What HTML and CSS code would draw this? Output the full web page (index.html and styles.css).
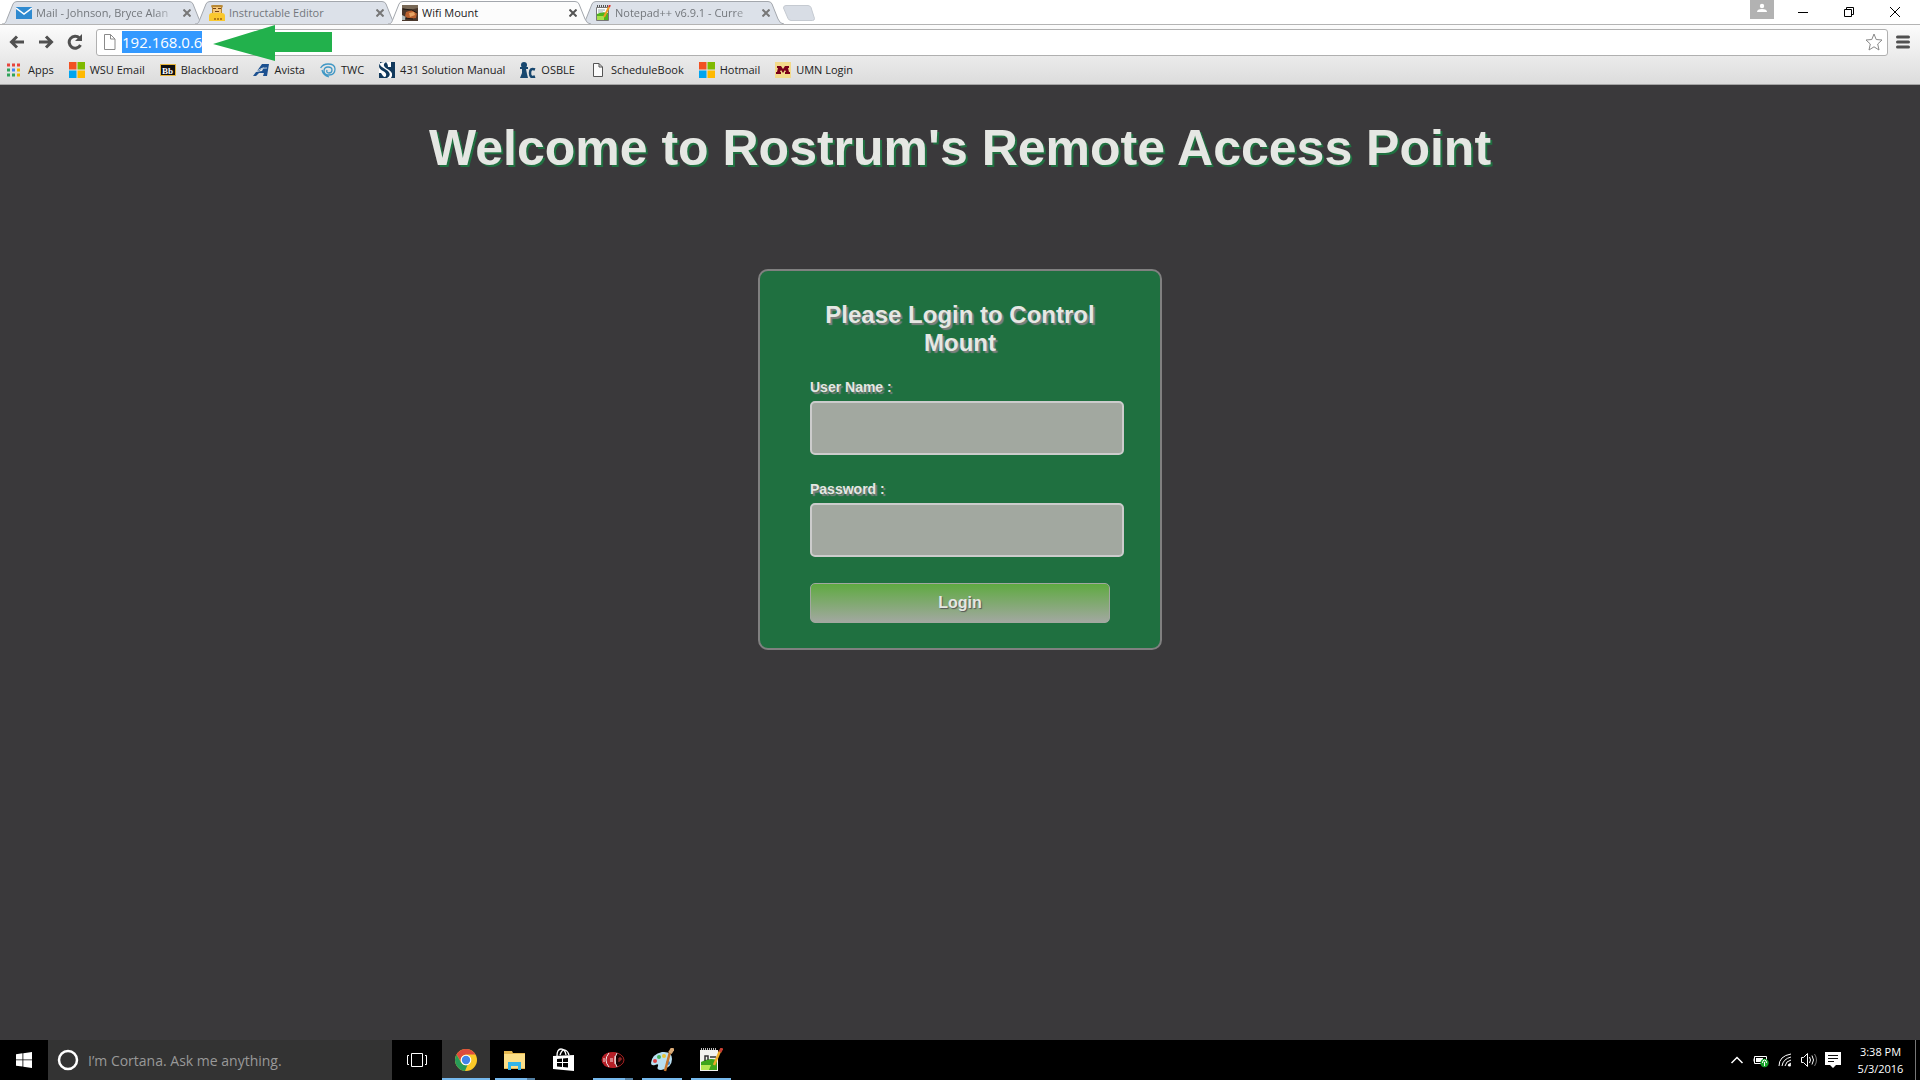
FILE: index.html
```html
<!DOCTYPE html>
<html lang="en">
<head>
<meta charset="utf-8">
<title>Wifi Mount</title>
<link rel="stylesheet" href="styles.css">
</head>
<body>
<svg class="defs" aria-hidden="true">
  <symbol id="tab-shape" viewBox="0 0 203 24"><path d="M0 24C4 24 4 21 5 19L11 4Q12 1.500 15 1.500H187Q190 1.500 191 4L197 19Q199 24 203 24" stroke="#a3a7ad"/></symbol>
  <symbol id="ms" viewBox="0 0 16 16"><path fill="#f25022" d="M0 0h7.500v7.500H0z"/><path fill="#7fba00" d="M8.500 0H16v7.500H8.500z"/><path fill="#00a4ef" d="M0 8.500h7.500V16H0z"/><path fill="#ffb900" d="M8.500 8.500H16V16H8.500z"/></symbol>
  <symbol id="page" viewBox="0 0 16 16"><path d="M3.500 1.500h5.500l3.500 3.500v9.500h-9zM9 1.500V5h3.500" fill="#fbfbfb" stroke="currentColor"/></symbol>
  <symbol id="npp" viewBox="0 0 16 16"><path d="M1.500 2.500h12v13h-12z" fill="#fff" stroke="#777"/><path d="M2 9q5-3 11-1v7H2z" fill="#4fb51c"/><path d="M2 11h7v4H2z" fill="#a8e04c"/><path d="M2 1h11" stroke="#555" stroke-width="2" stroke-dasharray="1 1"/><path d="M3 5h7M3 7h5" stroke="#9aa"/><path d="M14 2L9 12" stroke="#ee9b20" stroke-width="2"/><path d="M15 0l-1 2" stroke="#d33" stroke-width="2"/></symbol>
</svg>

<header class="browser">
  <div class="strip">
    <nav class="tabs" aria-label="Tabs">
      <div class="tab">
        <svg class="shape"><use href="#tab-shape"/></svg>
        <svg class="icon" viewBox="0 0 16 16"><path fill="#2f8ad0" d="M0 2h16v12H0z"/><path d="M0 3l8 6 8-6" fill="none" stroke="#fff" stroke-width="1.500"/></svg>
        <span class="name fade">Mail - Johnson, Bryce Alan</span>
        <button class="close" aria-label="Close tab"><svg viewBox="0 0 8 8"><path d="M.5.5l7 7M7.500.5l-7 7"/></svg></button>
      </div>
      <div class="tab">
        <svg class="shape"><use href="#tab-shape"/></svg>
        <svg class="icon" viewBox="0 0 16 16"><path fill="#b88835" d="M2 1q0-1 2-1h8q2 0 2 1l-1 2v5H3V3z"/><path fill="#f6c777" d="M4 2h8v6H4z"/><path d="M4 3.500h3m2 0h3M6 6.500h4" stroke="#704014"/><path fill="#fac82e" d="M0 16v-5q0-3 3-3h10q3 0 3 3v5z"/><path d="M5 14h8" stroke="#b67d15" stroke-width="2" stroke-dasharray="2 1"/></svg>
        <span class="name">Instructable Editor</span>
        <button class="close" aria-label="Close tab"><svg viewBox="0 0 8 8"><path d="M.5.5l7 7M7.500.5l-7 7"/></svg></button>
      </div>
      <div class="tab active">
        <svg class="shape"><use href="#tab-shape"/></svg>
        <svg class="icon" viewBox="0 0 16 16"><path fill="#49372b" d="M0 0h16v16H0z"/><path fill="#786856" d="M0 0h16v3L7 5 0 3z"/><path fill="#b8602e" d="M4 7l6-2 5 3-1 5-8 1-3-3z"/><path fill="#e8a565" d="M7 8l5-1 1 3-5 2z"/><path fill="#aeb8b8" d="M0 10l4 2-1 3H0z"/><path d="M1 4l9 1 5 3M3 13l8 1" stroke="#1c1511" fill="none"/></svg>
        <span class="name">Wifi Mount</span>
        <button class="close" aria-label="Close tab"><svg viewBox="0 0 8 8"><path d="M.5.5l7 7M7.500.5l-7 7"/></svg></button>
      </div>
      <div class="tab">
        <svg class="shape"><use href="#tab-shape"/></svg>
        <svg class="icon"><use href="#npp"/></svg>
        <span class="name fade">Notepad++ v6.9.1 - Curre</span>
        <button class="close" aria-label="Close tab"><svg viewBox="0 0 8 8"><path d="M.5.5l7 7M7.500.5l-7 7"/></svg></button>
      </div>
      <button class="newtab" aria-label="New tab"><svg viewBox="0 0 32 16"><path fill="#d8dde5" stroke="#c5cad1" d="M3 .5h22q2 0 3 2l3.500 11q0 2-2 2H8q-2 0-3-2L.5 3Q.5.5 3 .5z"/></svg></button>
    </nav>
    <div class="window-buttons">
      <button class="profile" aria-label="Profile"><svg viewBox="0 0 24 19"><circle cx="12" cy="6" r="2.200" fill="#fff"/><path fill="#fff" d="M7 12q0-3 5-3t5 3z"/></svg></button>
      <button aria-label="Minimize"><svg viewBox="0 0 46 24"><path d="M18 12.500h10"/></svg></button>
      <button aria-label="Restore"><svg viewBox="0 0 46 24"><path d="M18.500 9.500h7v7h-7zM20.500 9V7.500h7v7H26"/></svg></button>
      <button aria-label="Close"><svg viewBox="0 0 46 24"><path d="M18 7l10 10M28 7L18 17"/></svg></button>
    </div>
  </div>

  <div class="toolbar">
    <div class="address-row">
      <button class="nav" aria-label="Back"><svg viewBox="0 0 16 16"><path d="M15 8H3M8 2.500L2.500 8 8 13.500"/></svg></button>
      <button class="nav" aria-label="Forward"><svg viewBox="0 0 16 16"><path d="M1 8h12M8 2.500L13.500 8 8 13.500"/></svg></button>
      <button class="nav" aria-label="Reload"><svg viewBox="0 0 16 16"><path d="M12.500 4A6 6 0 1 0 13.500 11"/><path d="M15 0v7H8z" fill="#505050" stroke="none"/></svg></button>
      <div class="omnibox">
        <svg class="icon site" viewBox="0 0 16 16"><path d="M2.500.5h6L13 5v10.500H2.500zM8.500.5V5H13" fill="#fff" stroke="#8a8a8a"/></svg>
        <input class="url" type="text" value="192.168.0.6" aria-label="Address" spellcheck="false">
        <svg class="pointer" viewBox="0 0 120 36"><path fill="#22b14c" d="M0 19L62 0v7h57v20H62v9z"/></svg>
        <button class="star" aria-label="Bookmark this page"><svg viewBox="0 0 18 18"><path d="M9 1l2.200 5.500 5.800.5-4.300 4L14 17l-5-3.200L4 17l1.300-6L1 7l5.800-.5z"/></svg></button>
      </div>
      <button class="menu" aria-label="Menu"><svg viewBox="0 0 14 14"><path d="M1.500 2h11M1.500 7h11M1.500 12h11"/></svg></button>
    </div>
    <nav class="bookmarks" aria-label="Bookmarks">
      <a href="#"><svg class="icon" viewBox="0 0 16 16"><g stroke-width="3" stroke-dasharray="3 2"><path d="M0 3h13" stroke="#e7453c"/><path d="M0 8h3" stroke="#2fa35a"/><path d="M5 8h3" stroke="#4285f4"/><path d="M10 8h3" stroke="#f0b400"/><path d="M0 13h8" stroke="#2fa35a"/><path d="M10 13h3" stroke="#f0b400"/></g></svg>Apps</a>
      <a href="#"><svg class="icon"><use href="#ms"/></svg>WSU Email</a>
      <a href="#"><svg class="icon" viewBox="0 0 16 16"><path d="M.5 2.500h15v11H.5z" fill="#111" stroke="#e8b63c"/><text x="2" y="12" class="bb">Bb</text></svg>Blackboard</a>
      <a href="#"><svg class="icon" viewBox="0 0 16 16"><path fill="#1c5090" d="M9 2h7l-2 12h-4l1-3H6l-3 3H0l3-4 6-1 2-4-5 4H4z"/><path d="M4 9q5-4 10-3" stroke="#bcd" fill="none"/></svg>Avista</a>
      <a href="#"><svg class="icon" viewBox="0 0 16 16"><path d="M.6 6Q3 2 8 2q7 0 7 5 0 6-6 6-5 0-5-4 0-4 4-4 4 0 4 3t-3 3-2-3M2 8q1 5 7 7" fill="none" stroke="#3f97c5" stroke-width="1.300"/></svg>TWC</a>
      <a href="#"><svg class="icon" viewBox="0 0 16 16"><path fill="#fff" d="M0 0h16v16H0z"/><path fill="#11395c" d="M1 0h7Q4 1 5 4q1 2 5 4 5 3 2 8h4V0h-4v5H9Q9 1 6 0 0 0 0 4q0 3 4 5 4 2 3 5-1 2-3 0l-2-3H0v5h8q5-3 1-7L3 5Q0 3 1 0z"/></svg>431 Solution Manual</a>
      <a href="#"><svg class="icon" viewBox="0 0 16 16"><circle cx="4" cy="3" r="3" fill="#17476f"/><path fill="#17476f" d="M0 5h8v2H6l1 5 1 4H0l2-5V7H0z"/><path d="M15 7.500q-5-2-5 3.500t5 3.500" fill="none" stroke="#17476f" stroke-width="2.500"/></svg>OSBLE</a>
      <a href="#"><svg class="icon dark"><use href="#page"/></svg>ScheduleBook</a>
      <a href="#"><svg class="icon"><use href="#ms"/></svg>Hotmail</a>
      <a href="#"><svg class="icon" viewBox="0 0 16 16"><path fill="#f3da8b" d="M0 0h16v16H0z"/><path fill="#7a0019" d="M2 4h4l2 3 2-3h4v2h-1l1 4h1v2h-5v-2h1l-1-2-2 3-2-3-1 2h1v2H1v-2h1l1-4H2z"/></svg>UMN Login</a>
    </nav>
  </div>
</header>

<main class="site-page">
  <h1>Welcome to Rostrum's Remote Access Point</h1>
  <form class="login">
    <h2>Please Login to Control Mount</h2>
    <div class="field"><label for="user">User Name :</label><input id="user" type="text"></div>
    <div class="field"><label for="pass">Password :</label><input id="pass" type="password"></div>
    <button type="button">Login</button>
  </form>
</main>

<footer class="taskbar">
  <button class="task start" aria-label="Start"><svg viewBox="0 0 16 16"><path fill="#fff" d="M0 2.200L6.500 1.300v6.200H0zM7.300 1.200L16 0v7.500H7.300zM0 8.300h6.500v6.300L0 13.700zM7.300 8.300H16V16l-8.700-1.200z"/></svg></button>
  <div class="cortana">
    <svg viewBox="0 0 22 22"><circle cx="11" cy="11" r="9" fill="none" stroke="#fff" stroke-width="2.500"/></svg>
    <input type="text" placeholder="I’m Cortana. Ask me anything." aria-label="Search">
  </div>
  <div class="tasks">
    <button class="task" aria-label="Task view"><svg viewBox="0 0 24 24"><path d="M6.500 5.500h11v13h-11zM4 7.500H2.500v9H4M20 7.500h1.500v9H20" fill="none" stroke="#fff"/></svg></button>
    <button class="task current" aria-label="Chrome"><svg viewBox="0 0 24 24"><circle cx="12" cy="12" r="11" fill="#fbc928"/><path fill="#de4b3e" d="M2.500 6.500A11 11 0 0 1 21.500 6.500H12A5.500 5.500 0 0 0 7 14z"/><path fill="#289b58" d="M2.500 6.500L7.200 14.700A5.500 5.500 0 0 0 13.500 17L11 23A11 11 0 0 1 2.500 6.500z"/><circle cx="12" cy="12" r="5.300" fill="#fff"/><circle cx="12" cy="12" r="4.200" fill="#4384e8"/></svg></button>
    <button class="task open many" aria-label="File Explorer"><svg viewBox="0 0 24 24"><path fill="#e6b84f" d="M1 3h8l1 2h12v16H1z"/><path fill="#fcdf88" d="M1 6h21v14H1z"/><path fill="#33b5e9" d="M5 22v-8h13v8h-3v-4H8v4z"/></svg></button>
    <button class="task" aria-label="Store"><svg viewBox="0 0 24 24"><path fill="#fff" d="M1 8l21-1v16L1 21z"/><path d="M5 8Q5 1 9 1t5 6M8 7q2-6 5-5t4 5" fill="none" stroke="#fff" stroke-width="1.300"/><path fill="#000" d="M5 11l5-.5V14H5zM11 10.400l5-.4v4h-5zM5 15h5v4l-5-.5zM11 15h5v4.500l-5-.5z"/></svg></button>
    <button class="task open many" aria-label="Media tool"><svg viewBox="0 0 24 24"><ellipse cx="12" cy="12" rx="11" ry="7.500" fill="#160202" stroke="#a32020"/><path fill="#b51f27" d="M15 4.500Q1 3 1 12t14 7.500z"/><path d="M8 5q-6 7 0 14M16 5q-4 7 0 14" fill="none" stroke="#eee"/><path d="M3 10v4M9 11h3m-3 2h3M14 8v8" stroke="#f4dede"/><path d="M18 14v-4h2v2h-2" stroke="#b33" fill="none"/></svg></button>
    <button class="task open" aria-label="Paint"><svg viewBox="0 0 24 24"><path fill="#b9dff2" d="M1 15Q2 6 12 4q10-1 10 7 0 9-11 11-5 0-3-4 1-3-3-1-4 1-4-2z"/><circle cx="5" cy="13" r="2" fill="#d44"/><circle cx="9" cy="9" r="2" fill="#45b45b"/><circle cx="14" cy="8" r="2" fill="#e9c437"/><circle cx="18" cy="15" r="2" fill="#3986d5"/><path d="M20 4l-5 19" stroke="#c7762c" stroke-width="2.500"/><path d="M23 0l-3 5" stroke="#d9aa77" stroke-width="4"/></svg></button>
    <button class="task open" aria-label="Notepad++"><svg viewBox="0 0 24 24"><path fill="#f3f3ef" d="M1 2h18v21H1z"/><path fill="#3ea41b" d="M2 14q8-5 16-2v10H2z"/><path fill="#b5e653" d="M2 17h10l-2 5H2z"/><path d="M2 1h16" stroke="#bbb" stroke-width="2" stroke-dasharray="1 1"/><path d="M6 13V8h3v4m2-3h6" stroke="#333" fill="none" stroke-width="1.500"/><path d="M21 3l-6 14" stroke="#edab28" stroke-width="2.500"/><path d="M23 0l-2 4" stroke="#c94032" stroke-width="3"/></svg></button>
  </div>
  <div class="tray">
    <svg viewBox="0 0 16 16"><path d="M2.500 11L8 5.500l5.500 5.500" stroke-width="1.500"/></svg>
    <svg viewBox="0 0 16 16"><path d="M1.500 4.500h12v7h-12zM0 6.500v3"/><path d="M3 6h7v4H3z" fill="#fff" stroke="none"/><circle cx="11.500" cy="11" r="4.200" fill="#16a329" stroke="none"/><path d="M11.500 14v-4M9.500 11q0-3 2-3t2 3"/></svg>
    <svg class="wifi" viewBox="0 0 16 16"><path d="M2 14Q2 4 14 2M5 14Q6 7 14 5M8 14q1-5 6-6M11 14q1-2 3-3"/><circle cx="12.500" cy="13" r="1.500" fill="#fff" stroke="none"/></svg>
    <svg viewBox="0 0 16 16"><path d="M.5 5.500h2l4-4v13l-4-4h-2zM8.500 5q2 3 0 6M11 3.500q3 4.500 0 9"/><path d="M13.500 2q4 6 0 12" stroke="#777"/></svg>
    <svg viewBox="0 0 16 16"><path fill="#fff" stroke="none" d="M0 0h16v13h-5l-3 3-3-3H0z"/><path d="M3 3.500h10M3 6.500h10M3 9.500h6" stroke="#111"/></svg>
    <div class="clock"><time>3:38 PM</time><time>5/3/2016</time></div>
  </div>
</footer>
</body>
</html>
```
FILE: styles.css
```css
* { box-sizing: border-box; }

body {
  margin: 0;
  min-height: 100vh;
  display: flex;
  flex-direction: column;
  background: #3a393b;
  font-family: "Open Sans", "Noto Sans", sans-serif;
  font-size: 11px;
  color: #222;
}

button {
  border: 0;
  padding: 0;
  background: none;
  font: inherit;
  display: flex;
  align-items: center;
  justify-content: center;
}

svg { display: block; fill: none; flex: none; }
.defs { position: absolute; width: 0; height: 0; }
.icon { width: 16px; height: 16px; }
.dark { color: #555; }

/* Tab strip */
.strip { display: flex; justify-content: space-between; height: 24px; background: #fff; }
.tabs { display: flex; padding-left: 2px; }
.tab {
  position: relative;
  display: flex;
  align-items: center;
  gap: 4px;
  width: 203px;
  height: 24px;
  margin-right: -10px;
  padding: 2px 11px 0 14px;
  color: #73777c;
}
.tab > * { position: relative; }
.tab .shape { position: absolute; left: 0; top: 0; width: 203px; height: 24px; fill: #dce1e9; }
.tab.active { z-index: 1; color: #222; }
.active .shape { fill: #fcfcfc; }
.name { flex: 1; overflow: hidden; white-space: nowrap; line-height: 16px; }
.fade { mask-image: linear-gradient(to right, #000 85%, transparent); }
.close { width: 14px; height: 16px; }
.close svg { width: 8px; height: 8px; stroke: #777; stroke-width: 2; }
.active .close svg { stroke: #555; }
.newtab { width: 32px; height: 16px; margin: 5px 0 0 9px; }
.newtab svg { width: 32px; height: 16px; }

.window-buttons { display: flex; align-items: flex-start; padding-right: 2px; }
.window-buttons button { width: 46px; height: 24px; }
.window-buttons button svg { width: 46px; height: 24px; stroke: #000; }
.window-buttons .profile { width: 24px; height: 19px; margin-right: 6px; background: #b2b2b2; }
.window-buttons .profile svg { width: 24px; height: 19px; stroke: none; }

/* Address bar and bookmarks */
.toolbar {
  border-top: 1px solid #b4b4b4;
  border-bottom: 1px solid #a5a5a5;
  background: linear-gradient(#fcfcfc, #dcdcdc);
}
.address-row { display: flex; align-items: center; padding: 3px 10px 0 9px; }
.nav { width: 16px; height: 28px; margin-right: 13px; }
.nav svg { width: 16px; height: 16px; stroke: #505050; stroke-width: 3; }
.omnibox {
  position: relative;
  flex: 1;
  display: flex;
  align-items: center;
  height: 27px;
  margin-right: 8px;
  padding: 0 4px 0 5px;
  border: 1px solid #b0b0b0;
  border-radius: 3px;
  background: #fff;
}
.url {
  width: 80px;
  height: 22px;
  margin: 0 auto 0 4px;
  padding: 0;
  border: 0;
  outline: 0;
  background: #3399ff;
  color: #fff;
  font-family: inherit;
  font-size: 15px;
}
.pointer { position: absolute; left: 116px; top: -5px; width: 120px; height: 36px; z-index: 2; }
.star svg { width: 18px; height: 18px; stroke: #888; stroke-width: 1; }
.menu svg { width: 14px; height: 14px; stroke: #505050; stroke-width: 3; stroke-linecap: round; }
.bookmarks { display: flex; gap: 15px; height: 28px; padding: 0 7px; align-items: center; }
.bookmarks a {
  display: flex;
  align-items: center;
  gap: 5px;
  color: #222;
  line-height: 16px;
  text-decoration: none;
  white-space: nowrap;
}
.bb { font: bold 9px "Liberation Serif", serif; fill: #fff; }

/* Login page */
.site-page {
  flex: 1;
  display: flex;
  flex-direction: column;
  align-items: center;
  padding: 34px 16px;
  color: #e5e7e3;
  font-family: "Liberation Sans", Arial, sans-serif;
}
h1 {
  margin: 0 0 92px;
  font-size: 50px;
  line-height: 58px;
  text-align: center;
  text-shadow: 2px 2px #1f7040;
}
.login {
  width: 404px;
  padding: 30px 50px 25px;
  border: 2px solid #808080;
  border-radius: 10px;
  background: #1f7040;
  text-shadow: 2px 2px 1px #808080;
}
h2 { margin: 0 0 22px; font-size: 24px; line-height: 28px; text-align: center; }
.field { margin-bottom: 26px; }
.field label { display: block; margin-bottom: 6px; font-size: 14px; font-weight: bold; line-height: 16px; }
.field input {
  display: block;
  width: 314px;
  height: 54px;
  border: 2px solid #ccc;
  border-radius: 5px;
  background: #a2a8a0;
}
.login button {
  width: 100%;
  height: 40px;
  border: 1px solid #a2a8a0;
  border-radius: 5px;
  background: linear-gradient(#5faa41, #a2a8a0);
  color: #e5e7e3;
  font-size: 16px;
  font-weight: bold;
  text-shadow: 1px 1px 1px #555;
}

/* Taskbar */
.taskbar { display: flex; height: 40px; background: #000; }
.cortana { display: flex; align-items: center; gap: 9px; width: 344px; padding: 0 9px; background: #333; }
.cortana svg { width: 22px; height: 22px; }
.cortana input {
  flex: 1;
  border: 0;
  padding: 0;
  background: none;
  color: #999;
  font-family: inherit;
  font-size: 14px;
}
.cortana input::placeholder { color: #999; }
.tasks { display: flex; gap: 1px; padding-left: 1px; }
.task { position: relative; width: 48px; height: 40px; }
.task svg { width: 24px; height: 24px; }
.start svg { width: 16px; height: 16px; }
.current { background: #333; box-shadow: inset 0 -2px #76b9ed; }
.open::after {
  content: "";
  position: absolute;
  left: 4px;
  right: 4px;
  bottom: 0;
  height: 2px;
  background: #76b9ed;
}
.many::after { background: linear-gradient(to right, #76b9ed 80%, #527fa3 80%); }
.tray { display: flex; align-items: center; gap: 8px; margin-left: auto; padding-right: 4px; }
.tray > svg { width: 16px; height: 16px; stroke: #fff; }
.clock {
  display: flex;
  flex-direction: column;
  align-items: center;
  justify-content: center;
  width: 70px;
  height: 40px;
  margin-left: -3px;
  color: #fff;
  line-height: 17px;
  border-right: 1px solid #777;
}
```
